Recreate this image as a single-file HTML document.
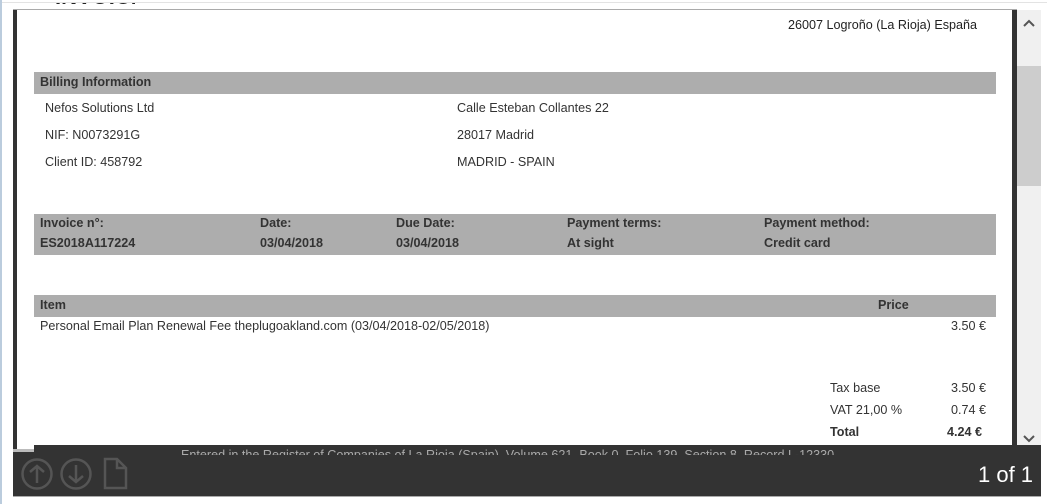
<!DOCTYPE html>
<html><head><meta charset="utf-8"><style>
*{margin:0;padding:0;box-sizing:border-box}
body{width:1047px;height:504px;background:#fff;position:relative;overflow:hidden;font-family:"Liberation Sans",Arial,sans-serif;font-size:12.6px;color:#333}
.a{position:absolute;white-space:nowrap}
.bar{position:absolute;background:#adadad;left:34px;width:962px}
b{font-weight:bold}
</style></head><body>
<div class="a" style="left:0;top:2px;width:1047px;height:1px;background:#e3e3e3"></div>
<div class="a" style="left:0;top:0;width:2px;height:504px;background:#bcd"></div>
<div class="a" style="left:13px;top:9px;width:1004px;height:1px;background:#aaa"></div>
<div class="a" style="left:13px;top:10px;width:4px;height:440px;background:#333"></div>
<div class="a" style="left:1012px;top:10px;width:5px;height:440px;background:#333"></div>
<div class="a" style="left:1017px;top:10px;width:24px;height:440px;background:#f0f0f0"></div>
<div class="a" style="left:1017px;top:66px;width:24px;height:120px;background:#cdcdcd"></div>
<svg class="a" style="left:1022px;top:19px" width="14" height="10"><path d="M2 7 L7 2 L12 7" stroke="#555" stroke-width="2" fill="none"/></svg>
<svg class="a" style="left:1022px;top:433px" width="14" height="10"><path d="M2 3 L7 8 L12 3" stroke="#555" stroke-width="2" fill="none"/></svg>
<div class="a" style="left:55px;top:3px;width:80px;height:6px;overflow:hidden"><div style="font-size:22px;font-weight:bold;margin-top:-19px;color:#222">INVOICE</div></div>

<div class="a" style="left:788px;top:18px;color:#222">26007 Logroño (La Rioja) España</div>

<div class="bar" style="top:72px;height:22px"></div>
<div class="a" style="left:40px;top:75px"><b>Billing Information</b></div>
<div class="a" style="left:45px;top:101px">Nefos Solutions Ltd</div>
<div class="a" style="left:45px;top:128px">NIF: N0073291G</div>
<div class="a" style="left:45px;top:155px">Client ID: 458792</div>
<div class="a" style="left:457px;top:101px">Calle Esteban Collantes 22</div>
<div class="a" style="left:457px;top:128px">28017 Madrid</div>
<div class="a" style="left:457px;top:155px">MADRID - SPAIN</div>

<div class="bar" style="top:214px;height:41px"></div>
<div class="a" style="left:40px;top:213px;line-height:20px"><b>Invoice n°:<br>ES2018A117224</b></div>
<div class="a" style="left:260px;top:213px;line-height:20px"><b>Date:<br>03/04/2018</b></div>
<div class="a" style="left:396px;top:213px;line-height:20px"><b>Due Date:<br>03/04/2018</b></div>
<div class="a" style="left:567px;top:213px;line-height:20px"><b>Payment terms:<br>At sight</b></div>
<div class="a" style="left:764px;top:213px;line-height:20px"><b>Payment method:<br>Credit card</b></div>

<div class="bar" style="top:295px;height:22px"></div>
<div class="a" style="left:40px;top:298px"><b>Item</b></div>
<div class="a" style="left:878px;top:298px"><b>Price</b></div>
<div class="a" style="left:40px;top:319px">Personal Email Plan Renewal Fee theplugoakland.com (03/04/2018-02/05/2018)</div>
<div class="a" style="left:951px;top:319px">3.50 €</div>

<div class="a" style="left:830px;top:381px">Tax base</div><div class="a" style="left:951px;top:381px">3.50 €</div>
<div class="a" style="left:830px;top:403px">VAT 21,00 %</div><div class="a" style="left:951px;top:403px">0.74 €</div>
<div class="a" style="left:830px;top:425px"><b>Total</b></div><div class="a" style="left:947px;top:425px"><b>4.24 €</b></div>

<div class="a" style="left:13px;top:450px;width:1028px;height:46px;background:#333"></div>
<div class="a" style="left:34px;top:445px;width:1007px;height:10px;background:#333;overflow:hidden"><div style="color:#aaa;margin:3px 0 0 147px;font-size:12.6px">Entered in the Register of Companies of La Rioja (Spain), Volume 621, Book 0, Folio 139, Section 8, Record L-12330</div></div>
<div class="a" style="left:13px;top:449px;width:21px;height:3px;background:#bbb"></div>
<svg class="a" style="left:20px;top:457px" width="110" height="34">
<g stroke="#555" stroke-width="2.5" fill="none">
<circle cx="17" cy="17" r="14.5"/><path d="M17 26 V9 M10 15 L17 9 L24 15"/>
<circle cx="56" cy="17" r="14.5"/><path d="M56 8 V25 M49 19 L56 25 L63 19"/>
<path d="M85 2 H97 L106 11 V31 H85 Z M97 2 V11 H106"/>
</g></svg>
<div class="a" style="left:978px;top:462px;font-size:22px;color:#fff">1 of 1</div>
<div class="a" style="left:13px;top:496px;width:1028px;height:1px;background:#aaa"></div>
</body></html>
